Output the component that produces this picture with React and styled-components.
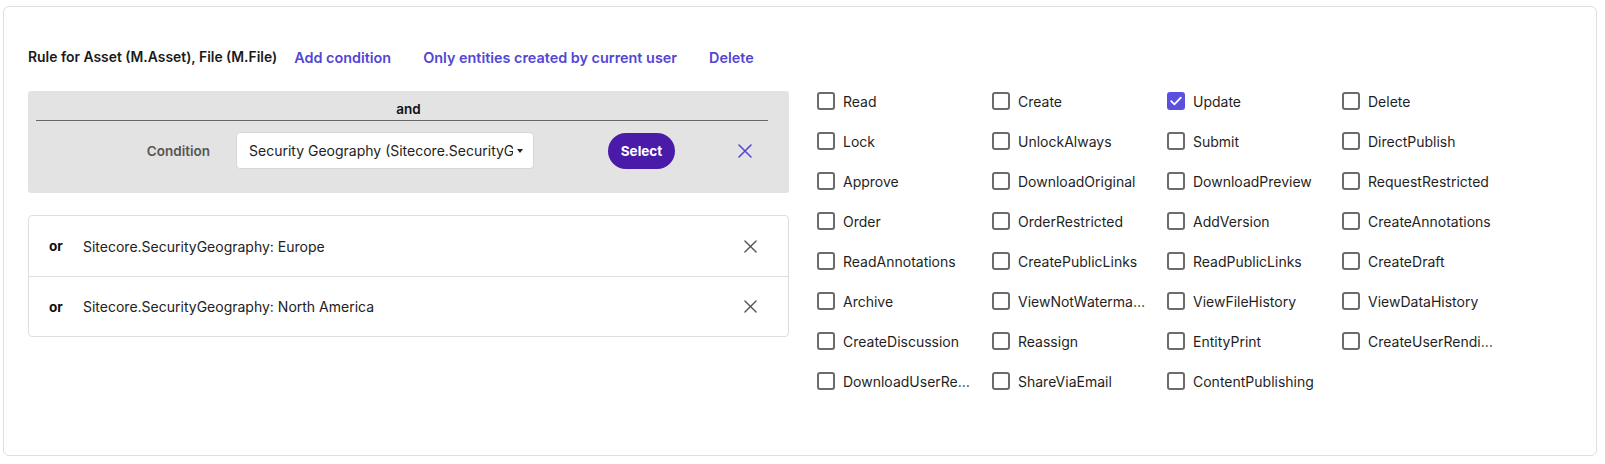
import React from "react";
import styled, { createGlobalStyle } from "styled-components";

const GlobalStyle = createGlobalStyle`
  html, body {
    margin: 0;
    padding: 0;
    background: #fff;
  }
  body {
    font-family: Inter, "Noto Sans", sans-serif;
    color: #1f1f1f;
    -webkit-font-smoothing: antialiased;
  }
  * { box-sizing: border-box; }
`;

const Page = styled.div`
  width: 1605px;
  height: 464px;
  padding: 6px 8px 8px 3px;
`;

const Card = styled.div`
  height: 450px;
  border: 1px solid #e0e0e0;
  border-radius: 6px;
  padding: 38px 24px 0 24px;
  display: grid;
  grid-template-columns: 761px 1fr;
  grid-template-rows: 24px auto;
  column-gap: 28px;
  row-gap: 22px;
  align-items: start;
`;

const Header = styled.div`
  grid-column: 1 / 3;
  display: flex;
  align-items: center;
  height: 24px;
`;

const RuleTitle = styled.span`
  font-size: 13.9px;
  font-weight: 600;
  color: #1a1a1a;
  margin-right: 1px;
`;

const LinkButton = styled.button`
  border: none;
  background: none;
  font-family: inherit;
  font-size: 14.4px;
  font-weight: 600;
  color: #5146d6;
  padding: 0 16px;
  cursor: pointer;
`;

const LeftColumn = styled.div`
  display: flex;
  flex-direction: column;
  gap: 22px;
`;

const RuleBox = styled.div`
  background: #e3e3e3;
  border-radius: 3px;
  height: 102px;
  display: flex;
  flex-direction: column;
`;

const Operator = styled.div`
  height: 30px;
  display: flex;
  align-items: flex-end;
  justify-content: center;
  padding-bottom: 3px;
  font-size: 13.5px;
  font-weight: 600;
  color: #111;
  border-bottom: 1px solid #666;
  margin: 0 21px 0 8px;
  padding-left: 13px;
`;

const ConditionRow = styled.div`
  display: flex;
  align-items: center;
  margin-top: 11px;
`;

const ConditionLabel = styled.span`
  width: 182px;
  text-align: right;
  font-size: 13.5px;
  font-weight: 600;
  color: #555;
`;

const SelectBox = styled.div`
  margin-left: 26px;
  width: 298px;
  height: 37px;
  background: #fff;
  border: 1px solid #d6d6d6;
  border-radius: 4px;
  display: flex;
  align-items: center;
  padding: 0 10px 0 12px;
  font-size: 14px;
  color: #222;
`;

const SelectText = styled.span`
  flex: 1;
  min-width: 0;
  white-space: nowrap;
  overflow: hidden;
  text-overflow: clip;
`;

const Caret = styled.span`
  flex: none;
  margin-left: 4px;
  width: 0;
  height: 0;
  border-left: 3.5px solid transparent;
  border-right: 3.5px solid transparent;
  border-top: 4px solid #222;
`;

const PrimaryButton = styled.button`
  margin-left: 74px;
  width: 67px;
  height: 36px;
  border: none;
  border-radius: 18px;
  background: #4a1aa9;
  color: #fff;
  font-family: inherit;
  font-size: 13.5px;
  font-weight: 700;
  cursor: pointer;
`;

const IconButton = styled.button`
  margin-left: ${(p) => p.$offset || 0}px;
  border: none;
  background: none;
  padding: 0;
  display: flex;
  align-items: center;
  justify-content: center;
  color: ${(p) => p.$color || "#555"};
  cursor: pointer;
`;

const ValueList = styled.div`
  border: 1px solid #dedede;
  border-radius: 4px;
`;

const ValueRow = styled.div`
  height: 60px;
  display: flex;
  align-items: center;
  padding: 0 31px 0 20px;
  & + & {
    border-top: 1px solid #dedede;
  }
`;

const OrTag = styled.span`
  width: 34px;
  font-size: 13.5px;
  font-weight: 700;
  color: #111;
`;

const ValueText = styled.span`
  flex: 1;
  font-size: 14px;
  color: #222;
`;

const PermissionGrid = styled.div`
  display: grid;
  grid-template-columns: repeat(4, 175px);
  grid-auto-rows: 24px;
  row-gap: 16px;
  margin-top: -2px;
`;

const Permission = styled.label`
  display: flex;
  align-items: center;
  gap: 8px;
  font-size: 14px;
  color: #1f1f1f;
`;

const Box = styled.span`
  flex: none;
  width: 18px;
  height: 18px;
  border-radius: 3px;
  border: 2px solid ${(p) => (p.$checked ? "#5a4fdf" : "#6b6b6b")};
  background: ${(p) => (p.$checked ? "#5a4fdf" : "#fff")};
  display: flex;
  align-items: center;
  justify-content: center;
`;

const PermissionName = styled.span`
  max-width: 128px;
  white-space: nowrap;
  overflow: hidden;
  text-overflow: ellipsis;
`;

const Cross = ({ size = 14, stroke = 1.8 }) => (
  <svg width={size} height={size} viewBox="0 0 14 14" fill="none">
    <path d="M1 1L13 13M13 1L1 13" stroke="currentColor" strokeWidth={stroke} strokeLinecap="round" />
  </svg>
);

const Check = () => (
  <svg width="12" height="10" viewBox="0 0 12 10" fill="none">
    <path d="M1.2 5.2L4.4 8.3L10.8 1.6" stroke="#fff" strokeWidth="1.8" strokeLinecap="round" strokeLinejoin="round" />
  </svg>
);

const permissions = [
  "Read", "Create", "Update", "Delete",
  "Lock", "UnlockAlways", "Submit", "DirectPublish",
  "Approve", "DownloadOriginal", "DownloadPreview", "RequestRestricted",
  "Order", "OrderRestricted", "AddVersion", "CreateAnnotations",
  "ReadAnnotations", "CreatePublicLinks", "ReadPublicLinks", "CreateDraft",
  "Archive", "ViewNotWatermarked", "ViewFileHistory", "ViewDataHistory",
  "CreateDiscussion", "Reassign", "EntityPrint", "CreateUserRenditions",
  "DownloadUserRenditions", "ShareViaEmail", "ContentPublishing",
];

const values = [
  "Sitecore.SecurityGeography: Europe",
  "Sitecore.SecurityGeography: North America",
];

export default function App() {
  return (
    <Page>
      <GlobalStyle />
      <Card>
        <Header>
          <RuleTitle>Rule for Asset (M.Asset), File (M.File)</RuleTitle>
          <LinkButton>Add condition</LinkButton>
          <LinkButton>Only entities created by current user</LinkButton>
          <LinkButton>Delete</LinkButton>
        </Header>

        <LeftColumn>
          <RuleBox>
            <Operator>and</Operator>
            <ConditionRow>
              <ConditionLabel>Condition</ConditionLabel>
              <SelectBox>
                <SelectText>Security Geography (Sitecore.SecurityGeography)</SelectText>
                <Caret />
              </SelectBox>
              <PrimaryButton>Select</PrimaryButton>
              <IconButton $offset={63} $color="#5548d9">
                <Cross size={14} stroke={1.6} />
              </IconButton>
            </ConditionRow>
          </RuleBox>

          <ValueList>
            {values.map((v) => (
              <ValueRow key={v}>
                <OrTag>or</OrTag>
                <ValueText>{v}</ValueText>
                <IconButton $color="#555">
                  <Cross size={13} stroke={1.5} />
                </IconButton>
              </ValueRow>
            ))}
          </ValueList>
        </LeftColumn>

        <PermissionGrid>
          {permissions.map((p) => (
            <Permission key={p}>
              <Box $checked={p === "Update"}>{p === "Update" && <Check />}</Box>
              <PermissionName>{p}</PermissionName>
            </Permission>
          ))}
        </PermissionGrid>
      </Card>
    </Page>
  );
}
